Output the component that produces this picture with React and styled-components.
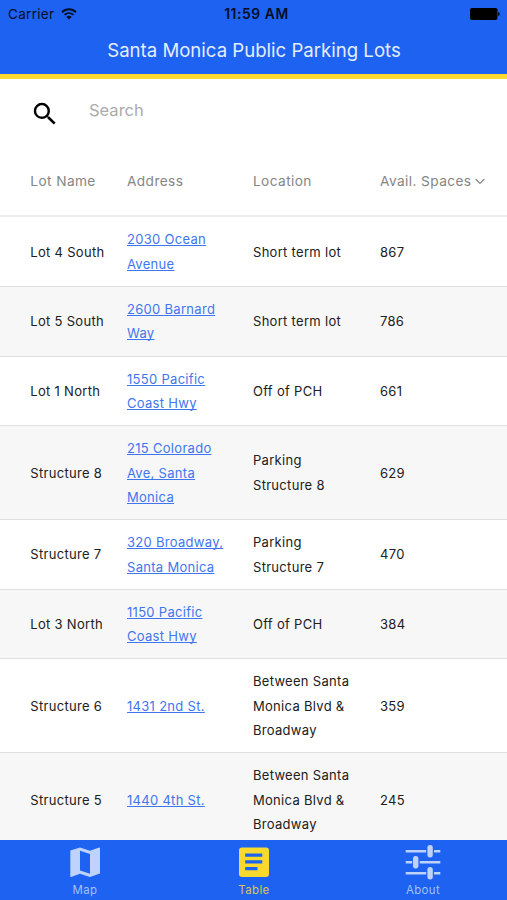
import React, { useState } from 'react';
import styled, { createGlobalStyle } from 'styled-components';
import { MdSearch } from 'react-icons/md';

const GlobalStyle = createGlobalStyle`
  * {
    box-sizing: border-box;
  }

  body {
    margin: 0;
    font-family: Inter, 'Liberation Sans', sans-serif;
    background: white;
  }
`;

const Screen = styled.div`
  display: flex;
  flex-direction: column;
  height: 900px;
  width: 507px;
  overflow: hidden;
`;

const Header = styled.header`
  flex: none;
  height: 79px;
  background: #1d62f0;
  border-bottom: 5.5px solid #f9d92e;
`;

const StatusBar = styled.div`
  display: grid;
  grid-template-columns: 1fr auto 1fr;
  align-items: center;
  height: 28px;
  padding: 0 7px 0 8px;
  color: #040d26;
  font-size: 13.5px;
  line-height: 28px;
`;

const Carrier = styled.div`
  display: flex;
  align-items: center;
  gap: 7px;
  letter-spacing: 0.3px;
`;

const Clock = styled.div`
  padding-left: 5px;
  font-weight: 600;
  font-size: 13.8px;
  letter-spacing: 0.6px;
`;

const BatteryIcon = styled.svg`
  justify-self: end;
`;

const Title = styled.h1`
  margin: 0;
  padding-left: 1px;
  color: #e4edff;
  font-size: 18.6px;
  font-weight: 400;
  line-height: 45px;
  text-align: center;
  white-space: nowrap;
`;

const SearchBar = styled.label`
  display: flex;
  flex: none;
  align-items: center;
  gap: 29px;
  height: 68px;
  padding: 2px 30px 0;

  svg {
    flex: none;
    color: black;
  }
`;

const SearchInput = styled.input`
  flex: 1;
  min-width: 0;
  margin-bottom: 8px;
  padding: 0;
  border: 0;
  outline: 0;
  font-family: inherit;
  font-size: 16.5px;
  background: transparent;

  &::placeholder {
    color: #ababab;
    opacity: 1;
  }
`;

const Table = styled.div`
  flex: 1;
  min-height: 0;
  overflow: hidden;
  font-size: 13px;
  letter-spacing: 0.3px;
  line-height: 24.4px;
`;

const Row = styled.div`
  display: grid;
  grid-template-columns: 96.7px 126px 127px 1fr;
  align-items: center;
  padding: 10px 0 9.8px 30.3px;
  border-bottom: 1.2px solid #e0e0e0;
  background: ${(props) => (props.$shaded ? '#f7f7f7' : 'white')};
  color: #202020;
`;

const HeadRow = styled(Row)`
  height: 70.4px;
  padding-top: 0;
  padding-bottom: 0;
  border-bottom: 2px solid #eeeeee;
  color: #858585;
  font-size: 13.7px;
  letter-spacing: 0.4px;
`;

const Cell = styled.div`
  display: flex;
  align-items: center;
  gap: 4px;
  padding-right: ${(props) => props.$gutter || 0}px;
  white-space: ${(props) => (props.$gutter ? 'normal' : 'nowrap')};
`;

const AddressLink = styled.a`
  color: #3f76ee;
  text-decoration: underline;
  text-decoration-skip-ink: none;
  text-underline-offset: 1px;
`;

const TabBar = styled.nav`
  display: grid;
  flex: none;
  grid-template-columns: repeat(3, 1fr);
  height: 60px;
  background: #1d62f0;
`;

const Tab = styled.button`
  display: flex;
  flex-direction: column;
  align-items: center;
  padding: 4px 0 0 1px;
  border: 0;
  background: none;
  color: ${(props) => (props.$active ? '#f9d92e' : '#bed2fc')};
  font-family: inherit;
  font-size: 11.4px;
  letter-spacing: 0.4px;
  line-height: 14px;
  cursor: pointer;

  svg {
    margin-bottom: 3px;
  }

  span {
    opacity: 0.85;
  }
`;

const lots = [
  { name: 'Lot 4 South', address: '2030 Ocean Avenue', location: 'Short term lot', spaces: 867 },
  { name: 'Lot 5 South', address: '2600 Barnard Way', location: 'Short term lot', spaces: 786 },
  { name: 'Lot 1 North', address: '1550 Pacific Coast Hwy', location: 'Off of PCH', spaces: 661 },
  { name: 'Structure 8', address: '215 Colorado Ave, Santa Monica', location: 'Parking Structure 8', spaces: 629 },
  { name: 'Structure 7', address: '320 Broadway, Santa Monica', location: 'Parking Structure 7', spaces: 470 },
  { name: 'Lot 3 North', address: '1150 Pacific Coast Hwy', location: 'Off of PCH', spaces: 384 },
  { name: 'Structure 6', address: '1431 2nd St.', location: 'Between Santa Monica Blvd & Broadway', spaces: 359 },
  { name: 'Structure 5', address: '1440 4th St.', location: 'Between Santa Monica Blvd & Broadway', spaces: 245 },
];

const WifiIcon = () => (
  <svg width="16" height="12" viewBox="0 0 16 12" fill="none" stroke="currentColor" strokeWidth="1.9">
    <path d="M1 4.2C5 .3 11 .3 15 4.2" />
    <path d="M3.6 6.9c2.6-2.4 6.2-2.4 8.8 0" />
    <path d="M8 11.6L5.3 8.9c1.6-1.4 3.8-1.4 5.4 0z" fill="currentColor" stroke="none" />
  </svg>
);

const Battery = () => (
  <BatteryIcon width="30" height="12" viewBox="0 0 30 12" fill="black">
    <rect x="0" y="0" width="27.5" height="12" rx="2" />
    <path d="M28.2 4v4c2-.7 2-3.3 0-4z" />
  </BatteryIcon>
);

const MapIcon = () => (
  <svg width="36" height="36" viewBox="0 0 36 36" fill="currentColor" fillRule="evenodd">
    <path d="M3.3 6.4L13 3.5l10 3.3 9.2-3.3q.8-.1.8.6v25.5L23 33l-10-3.3L4 33q-.7.1-.7-.5zM13 6.8v19.7l10 3.3V10z" />
  </svg>
);

const TableIcon = () => (
  <svg width="36" height="36" viewBox="0 0 36 36" fill="currentColor" fillRule="evenodd">
    <path d="M6 3.5h24a3 3 0 0 1 3 3V30a3 3 0 0 1-3 3H6a3 3 0 0 1-3-3V6.5a3 3 0 0 1 3-3zM9.2 9.5v3.3h17.1V9.5zM9.2 16.2v3.3h17.1v-3.3zM9.2 22.9v3.3h12.300v-3.300z" />
  </svg>
);

const SlidersIcon = () => (
  <svg width="36" height="36" viewBox="0 0 36 36" fill="currentColor">
    <path d="M.7 6h20.500v2.400H.7zM29 6h6.300v2.400H29zM.7 17h6.500v2.400H.7zM14.700 17h20.600v2.400H14.700zM.7 28h20.500v2.400H.7zM29 28h6.300v2.400H29z" />
    <rect x="22.4" y="1" width="5.4" height="12.4" rx="2.6" />
    <rect x="8" y="12" width="5.4" height="12.4" rx="2.6" />
    <rect x="22.4" y="23" width="5.4" height="12.4" rx="2.6" />
  </svg>
);

const tabs = [
  { label: 'Map', Icon: MapIcon },
  { label: 'Table', Icon: TableIcon },
  { label: 'About', Icon: SlidersIcon },
];

const App = () => {
  const [activeTab, setActiveTab] = useState('Table');

  return (
    <Screen>
      <GlobalStyle />
      <Header>
        <StatusBar>
          <Carrier>
            Carrier
            <WifiIcon />
          </Carrier>
          <Clock>11:59 AM</Clock>
          <Battery />
        </StatusBar>
        <Title>Santa Monica Public Parking Lots</Title>
      </Header>
      <SearchBar>
        <MdSearch size={30} />
        <SearchInput placeholder="Search" />
      </SearchBar>
      <Table>
        <HeadRow>
          <Cell>Lot Name</Cell>
          <Cell>Address</Cell>
          <Cell>Location</Cell>
          <Cell>
            Avail. Spaces
            <svg width="10" height="7" viewBox="0 0 10 7" fill="none" stroke="currentColor" strokeWidth="1.1">
              <path d="M.6 1L5 5.5 9.4 1" />
            </svg>
          </Cell>
        </HeadRow>
        {lots.map((lot, index) => (
          <Row key={lot.name} $shaded={index % 2 === 1}>
            <Cell>{lot.name}</Cell>
            <Cell $gutter={28}>
              <AddressLink href="#">{lot.address}</AddressLink>
            </Cell>
            <Cell $gutter={26}>{lot.location}</Cell>
            <Cell>{lot.spaces}</Cell>
          </Row>
        ))}
      </Table>
      <TabBar>
        {tabs.map(({ label, Icon }) => (
          <Tab key={label} $active={label === activeTab} onClick={() => setActiveTab(label)}>
            <Icon />
            <span>{label}</span>
          </Tab>
        ))}
      </TabBar>
    </Screen>
  );
};

export default App;
